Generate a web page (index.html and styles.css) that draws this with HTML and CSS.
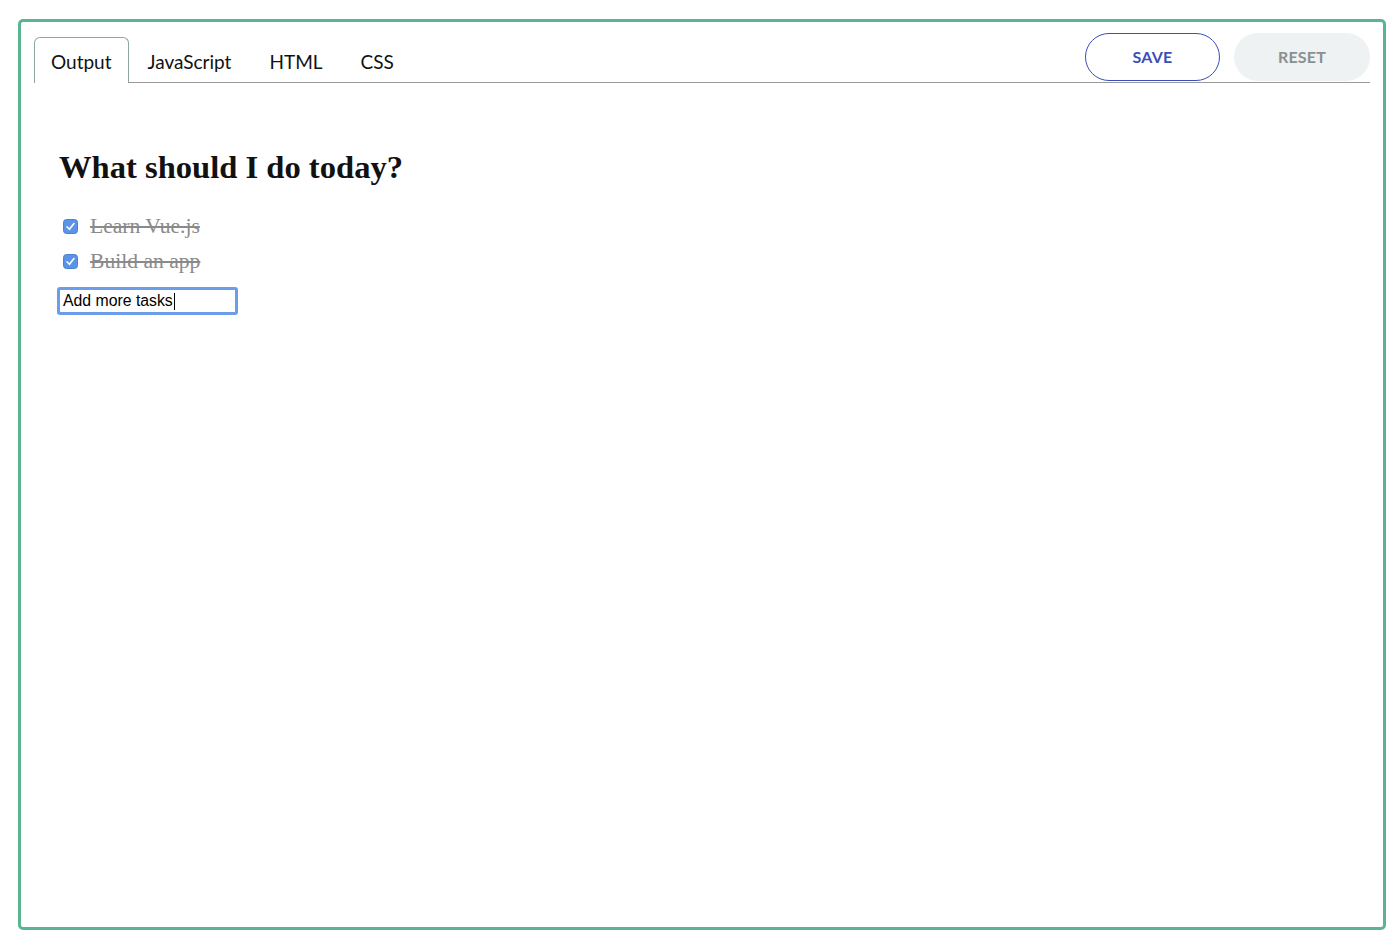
FILE: index.html
```html
<!DOCTYPE html>
<html>
<head>
<meta charset="utf-8">
<link rel="stylesheet" href="styles.css">
</head>
<body>
<div class="frame">
  <div class="header">
    <div class="tabs">
      <div class="tab active">Output</div>
      <div class="tab">JavaScript</div>
      <div class="tab">HTML</div>
      <div class="tab">CSS</div>
    </div>
    <div class="actions">
      <button class="btn save">SAVE</button>
      <button class="btn reset">RESET</button>
    </div>
  </div>
  <div class="output">
    <h1 class="title">What should I do today?</h1>
    <ul class="todos">
      <li class="todo">
        <span class="check"><svg width="15" height="15" viewBox="0 0 15 15"><rect x="0.5" y="0.5" width="14" height="14" rx="3" fill="#5b93e6" stroke="#4a80d6"/><path d="M4 7.8 L6.4 10.3 L11 4.6" fill="none" stroke="#fff" stroke-width="1.6" stroke-linecap="round" stroke-linejoin="round"/></svg></span>
        <span class="done">Learn Vue.js</span>
      </li>
      <li class="todo">
        <span class="check"><svg width="15" height="15" viewBox="0 0 15 15"><rect x="0.5" y="0.5" width="14" height="14" rx="3" fill="#5b93e6" stroke="#4a80d6"/><path d="M4 7.8 L6.4 10.3 L11 4.6" fill="none" stroke="#fff" stroke-width="1.6" stroke-linecap="round" stroke-linejoin="round"/></svg></span>
        <span class="done">Build an app</span>
      </li>
    </ul>
    <div class="field"><span class="value">Add more tasks</span><span class="caret"></span></div>
  </div>
</div>
</body>
</html>
```
FILE: styles.css
```css
html, body {
  margin: 0;
  padding: 0;
  background: #fff;
}
.frame {
  box-sizing: border-box;
  margin: 19px 14px 0 18px;
  height: 911px;
  border: 3px solid #5cb592;
  border-radius: 5px;
  padding: 11px 13px 0 13px;
}
.header {
  display: flex;
  align-items: flex-start;
  border-bottom: 1px solid #9a9a9a;
  height: 49px;
}
.tabs {
  display: flex;
  align-self: flex-end;
  margin-bottom: -1px;
}
.tab {
  box-sizing: border-box;
  height: 46px;
  padding: 12px 18px 0 18px;
  font-family: Lato, "Open Sans", sans-serif;
  font-size: 19px;
  color: #111;
  border: 1px solid transparent;
  border-bottom: none;
}
.tab.active {
  border-color: #8fa69b;
  border-radius: 6px 6px 0 0;
  background: #fff;
  padding-left: 16px;
  padding-right: 16px;
}
.actions {
  margin-left: auto;
  display: flex;
  gap: 14px;
}
.btn {
  box-sizing: border-box;
  height: 48px;
  border-radius: 24px;
  font-family: Lato, sans-serif;
  font-weight: 700;
  font-size: 16px;
  letter-spacing: 0.2px;
  padding: 0 0 2px 0;
  cursor: pointer;
}
.btn.save {
  width: 135px;
  background: #fff;
  color: #3a4fb8;
  border: 1.5px solid #3a4fb8;
}
.btn.reset {
  width: 136px;
  background: #eef2f3;
  color: #8a8f91;
  border: none;
}
.output {
  padding: 0 0 0 25px;
}
.title {
  font-family: "Liberation Serif", "Times New Roman", serif;
  font-weight: 700;
  font-size: 32.6px;
  color: #111;
  margin: 64px 0 0 0;
  line-height: 40px;
}
.todos {
  list-style: none;
  margin: 22px 0 0 0;
  padding: 0;
}
.todo {
  display: flex;
  align-items: center;
  height: 35px;
  padding-left: 4px;
}
.check {
  display: flex;
  width: 15px;
  height: 15px;
}
.done {
  margin-left: 12px;
  font-family: "Liberation Serif", "Times New Roman", serif;
  font-size: 21.6px;
  color: #8a8a8a;
  text-decoration: line-through;
}
.field {
  box-sizing: border-box;
  margin: 8px 0 0 -2px;
  width: 181px;
  height: 28px;
  border: 3px solid #6b9de8;
  border-radius: 3px;
  display: flex;
  align-items: center;
  padding-left: 3px;
  font-family: "Liberation Sans", Arial, sans-serif;
  font-size: 15.8px;
  color: #000;
}
.caret {
  display: inline-block;
  width: 1px;
  height: 17px;
  background: #000;
  margin-left: 1px;
}
```
